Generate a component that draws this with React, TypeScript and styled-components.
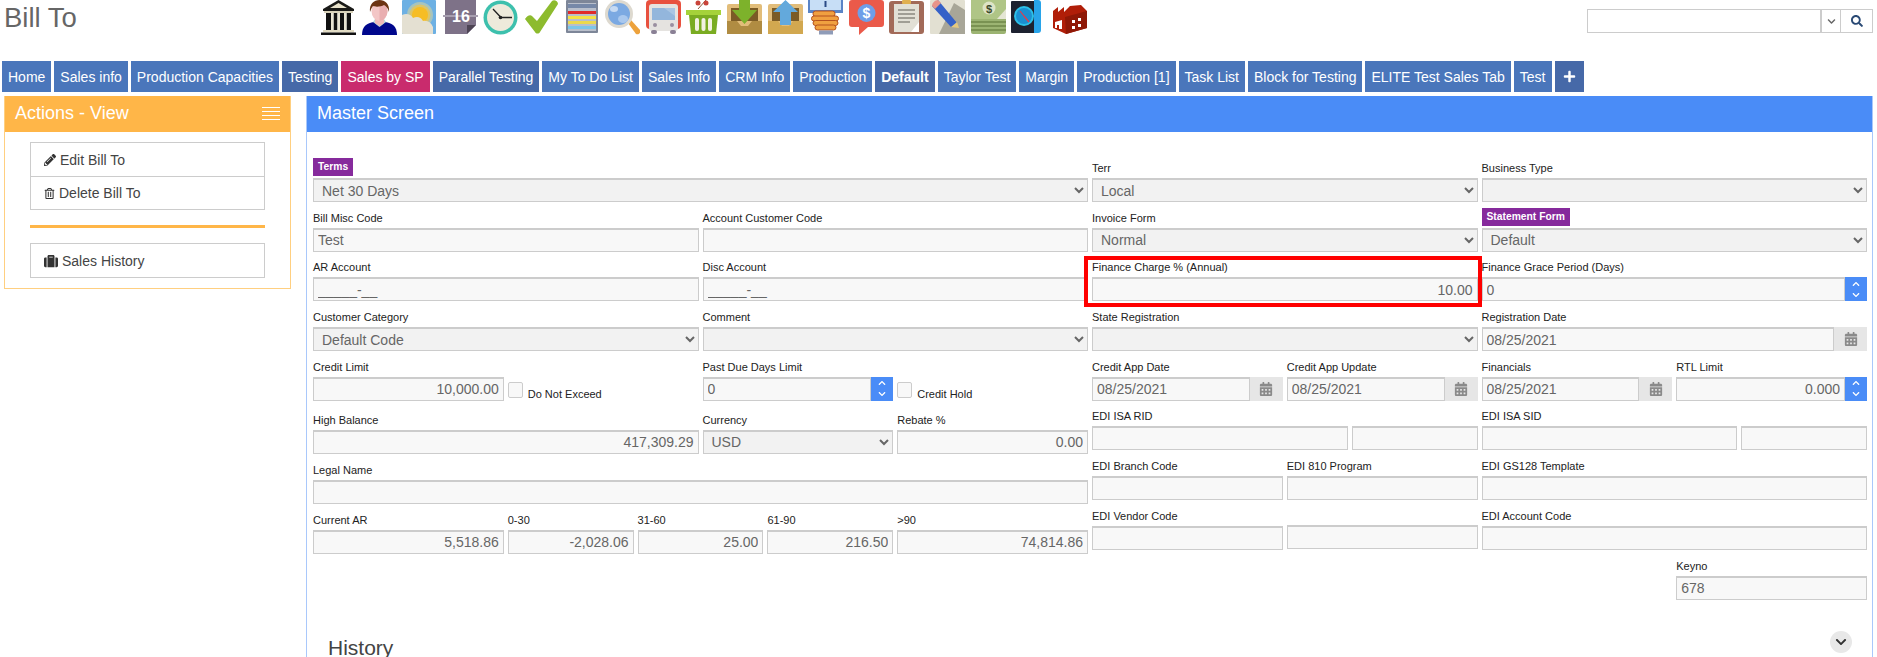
import React from 'react';
import styled, { createGlobalStyle } from 'styled-components';
import {
  FaCalendarAlt,
  FaChevronDown,
  FaChevronUp,
  FaPencilAlt,
  FaPlus,
  FaRegTrashAlt,
  FaSearch,
  FaSuitcase,
} from 'react-icons/fa';

const GlobalStyle = createGlobalStyle`
  html, body {
    margin: 0;
    height: 657px;
    overflow: hidden;
    background: #fff;
  }
  body {
    font-family: "Liberation Sans", Arial, sans-serif;
    color: #333;
  }
  * { box-sizing: border-box; }
`;

const Page = styled.div`
  width: 1877px;
  height: 657px;
  overflow: hidden;
  display: flex;
  flex-direction: column;
`;

const Header = styled.header`
  display: flex;
  align-items: flex-start;
  height: 61px;
  flex: none;
  padding: 0 4px;
`;

const Title = styled.h1`
  width: 317px;
  margin: 0;
  font-size: 27.5px;
  font-weight: 400;
  line-height: 35px;
  color: #666;
`;

const IconBar = styled.div`
  display: flex;
  gap: 5.6px;
`;

const SearchBox = styled.div`
  display: flex;
  margin: 9px 0 0 auto;
  height: 24px;
  width: 286px;
  border: 1px solid #ccc;
`;

const SearchInput = styled.input`
  flex: 1;
  min-width: 0;
  border: 0;
  border-right: 2px solid #ccc;
  outline: 0;
  background: #fff;
`;

const SearchCell = styled.span<{ $width: number }>`
  display: flex;
  align-items: center;
  justify-content: center;
  width: ${p => p.$width}px;
  color: ${p => (p.$width < 20 ? '#666' : '#2a4a75')};
  & + & { border-left: 1px solid #ccc; }
`;

const TabBar = styled.nav`
  display: flex;
  flex: none;
  gap: 3px;
  height: 31px;
  padding-left: 2px;
`;

const Tab = styled.a<{ $tone?: 'dark' | 'pink'; $bold?: boolean; $wide?: boolean }>`
  display: flex;
  align-items: center;
  padding: 0 ${p => (p.$wide ? 8 : 6)}px;
  font-size: 14px;
  font-weight: ${p => (p.$bold ? 700 : 400)};
  color: #fff;
  white-space: nowrap;
  background: ${p => (p.$tone === 'dark' ? '#4669a8' : p.$tone === 'pink' ? '#c92b6d' : '#4a76bb')};
`;

const Content = styled.div`
  display: flex;
  flex: 1;
  min-height: 0;
  gap: 15px;
  padding: 4px 4px 0;
`;

const Sidebar = styled.aside`
  flex: none;
  align-self: flex-start;
  width: 287px;
  border: 1px solid #ffcf80;
  border-top: 0;
`;

const PanelHeader = styled.div<{ $color: string }>`
  display: flex;
  align-items: center;
  justify-content: space-between;
  height: 36px;
  padding: 0 10px 2px;
  font-size: 18px;
  color: #fff;
  background: ${p => p.$color};
`;

const SidebarBody = styled.div`
  padding: 10px 25px 10px 25px;
`;

const MenuList = styled.div`
  display: flex;
  flex-direction: column;
  border: 1px solid #ccc;
`;

const MenuItem = styled.a`
  display: flex;
  align-items: center;
  gap: 4px;
  height: 33px;
  padding-left: 13px;
  font-size: 14px;
  color: #444;
  & + & { border-top: 1px solid #ccc; }
  svg { color: #333; }
`;

const MenuDivider = styled.hr`
  height: 3px;
  margin: 15px 0;
  border: 0;
  background: #ffb648;
`;

const MainPanel = styled.main`
  flex: 1;
  min-width: 0;
  border-left: 1px solid #a9c8fb;
  border-right: 1px solid #a9c8fb;
`;

const PanelBody = styled.div`
  padding: 26px 5px 0 6px;
`;

const FormColumns = styled.div`
  display: grid;
  grid-template-columns: 1fr 1fr;
  column-gap: 4px;
`;

const Row = styled.div<{ $after?: number }>`
  display: grid;
  grid-template-columns: repeat(12, minmax(0, 1fr));
  column-gap: 4px;
  margin-bottom: ${p => p.$after ?? 5.7}px;
`;

const Field = styled.div<{ $span: number; $start?: number; $marked?: boolean }>`
  position: relative;
  min-width: 0;
  grid-column: ${p => (p.$start ? `${p.$start} / span ${p.$span}` : `span ${p.$span}`)};
  ${p =>
    p.$marked &&
    `&::after {
      content: '';
      position: absolute;
      inset: -1px -4px -6px -8px;
      border: 4px solid #f00;
      pointer-events: none;
    }`}
`;

const FieldLabel = styled.div`
  height: 20px;
  font-size: 11px;
  line-height: 20px;
  color: #222;
  white-space: nowrap;
`;

const Badge = styled.span`
  display: inline-block;
  height: 18px;
  padding: 0 5px;
  font-size: 10.3px;
  font-weight: 700;
  line-height: 18px;
  color: #fff;
  vertical-align: top;
  background: #862a9c;
`;

const TextInput = styled.input<{ $right?: boolean; $lifted?: boolean }>`
  display: block;
  flex: 1;
  width: 100%;
  min-width: 0;
  height: 24px;
  margin-top: ${p => (p.$lifted ? '-1px' : 0)};
  padding: 0 4px;
  font: 14px "Liberation Sans", Arial, sans-serif;
  text-align: ${p => (p.$right ? 'right' : 'left')};
  color: #666;
  background: #f8f8f8;
  border: 1px solid #ccc;
  border-top-width: 2px;
  border-radius: 0;
  outline: 0;
`;

const SelectInput = styled.select`
  display: block;
  width: 100%;
  height: 24px;
  padding: 0 4px;
  font: 14px "Liberation Sans", Arial, sans-serif;
  color: #666;
  background-color: #f2f2f2;
  border: 1px solid #ccc;
  border-top-width: 2px;
  border-radius: 0;
  outline: 0;
`;

const InputGroup = styled.div`
  display: flex;
`;

const CalendarAddon = styled.span`
  display: flex;
  flex: none;
  align-items: center;
  justify-content: center;
  width: 33px;
  height: 24px;
  font-size: 14px;
  color: #8a8a8a;
  background: #e6e6e6;
`;

const Spinner = styled.span`
  display: flex;
  flex: none;
  flex-direction: column;
  align-items: center;
  justify-content: center;
  gap: 3px;
  width: 22px;
  height: 24px;
  font-size: 8px;
  color: #fff;
  background: #4a8cf7;
`;

const CheckLine = styled.label`
  display: flex;
  align-items: flex-end;
  gap: 5px;
  margin-top: 25px;
  font-size: 11px;
  line-height: 12px;
  color: #222;
`;

const CheckText = styled.span`
  margin-bottom: -2px;
`;

const CheckBox = styled.input`
  appearance: none;
  flex: none;
  width: 15px;
  height: 16px;
  margin: 0;
  background: #f8f8f8;
  border: 1px solid #ccc;
  border-radius: 2px;
`;

const SectionRow = styled.div`
  display: flex;
  align-items: flex-start;
  justify-content: space-between;
  margin-top: 35px;
  padding: 0 15px 0 15px;
`;

const SectionTitle = styled.h2`
  margin: 0;
  font-size: 21px;
  font-weight: 400;
  line-height: 16px;
  color: #444;
`;

const CollapseButton = styled.span`
  display: flex;
  align-items: center;
  justify-content: center;
  width: 22px;
  height: 22px;
  margin-top: -9px;
  font-size: 12px;
  color: #333;
  background: #e8e8e8;
  border-radius: 50%;
`;

const Ico: React.FC<{ children: React.ReactNode }> = ({ children }) => (
  <svg width="35" height="35" viewBox="0 0 35 35" style={{ flex: 'none', display: 'block' }}>
    {children}
  </svg>
);

const toolbarIcons: React.ReactNode[] = [
  // bank
  <Ico key="bank">
    <path d="M17.5 0 2 9v2h31V9z" fill="#1a1a18" />
    <path d="M17.5 3 9 8h17z" fill="#e9e3cc" />
    <rect x="3" y="11" width="29" height="2" fill="#d8d2ba" />
    <path d="M5 13h5v17H5zM12.5 13h4v17h-4zM19 13h4v17h-4zM25.5 13H30v17h-4.500z" fill="#111" />
    <path d="M10 13h2.500v17H10zM16.500 13H19v17h-2.500zM23 13h2.500v17H23z" fill="#e8e4d2" />
    <rect x="2" y="30" width="31" height="2.500" fill="#e2dcc4" />
    <rect x="0" y="32.500" width="35" height="2.500" fill="#111" />
  </Ico>,
  // person
  <Ico key="person">
    <path d="M0 35c0-9 5-12 12-13h11c7 1 12 4 12 13z" fill="#00078c" />
    <path d="M11 22l6.500 5 6.500-5-2-3H13z" fill="#bcdcd8" />
    <path d="M13 18h9v5l-4.500 3-4.500-3z" fill="#eeb9b9" />
    <ellipse cx="17.500" cy="11" rx="8" ry="10" fill="#f3c6c6" />
    <path d="M17.500 3v18c4 0 8-5 8-10s-4-8-8-8z" fill="#e9aeb0" />
    <path d="M8 12C7 4 12 0 17.500 0S28 4 27 12c-1-4-3-6-5-7-3 2-9 2-11 1-1 1-2 3-3 6z" fill="#6b3312" />
  </Ico>,
  // weather
  <Ico key="weather">
    <rect width="34" height="34" rx="1" fill="#6db0e3" />
    <circle cx="18" cy="15" r="13" fill="#a8c4bd" />
    <circle cx="18" cy="15" r="10.500" fill="#dcc56a" />
    <circle cx="18" cy="15" r="8" fill="#f6bd24" />
    <path d="M0 15c4-2 9-1 11 3 4-2 8-1 10 3 4-1 8 1 10 6v7H1a1 1 0 0 1-1-1z" fill="#e4e0d2" />
  </Ico>,
  // calendar
  <Ico key="calendar">
    <path d="M2 0h31v25l-9 9H2z" fill="#7e7288" />
    <path d="M33 25h-9v9z" fill="#cfc6e0" />
    <path d="M24 25h9l-9 9z" fill="#4d4454" />
    <rect x="0" y="15" width="35" height="2" fill="#a79fb0" />
    <text x="18" y="22" textAnchor="middle" fontFamily="Liberation Sans" fontWeight="700" fontSize="16" fill="#fff">16</text>
  </Ico>,
  // clock
  <Ico key="clock">
    <circle cx="17.500" cy="17.500" r="17" fill="#3dc0ad" />
    <circle cx="17.500" cy="17.500" r="13.500" fill="#eeeadb" />
    <path d="M10 9l7.500 8M17.500 17.500H29" stroke="#222" strokeWidth="1.300" fill="none" />
    <circle cx="17.500" cy="17.500" r="1.800" fill="#222" />
  </Ico>,
  // check
  <Ico key="check">
    <path d="M1 19c2-3 5-5 7-3l5 5L28 1c2-2 6 0 6 3L16 32c-1 2-4 2-5 0z" fill="#8dbb2e" />
  </Ico>,
  // report
  <Ico key="report">
    <rect x="1" y="0" width="32" height="33" rx="1" fill="#7d8698" />
    <rect x="3" y="3" width="28" height="28" fill="#b9bfcb" />
    <rect x="3" y="4" width="28" height="4" fill="#7688a8" />
    <rect x="3" y="11" width="28" height="3" fill="#e02a2a" />
    <rect x="3" y="16" width="28" height="3" fill="#f4e246" />
    <rect x="3" y="21" width="28" height="3" fill="#ecd94e" />
    <rect x="3" y="26" width="28" height="3" fill="#7cc6ea" />
  </Ico>,
  // magnifier
  <Ico key="magnifier">
    <path d="M23 23l3-3 9 10c1 3-1 5-4 4z" fill="#eda23c" />
    <circle cx="14" cy="14" r="14" fill="#ddd9cf" />
    <circle cx="14" cy="14" r="11" fill="#7ba9e2" />
    <ellipse cx="18" cy="19" rx="5" ry="4" fill="#a9c8ee" />
    <ellipse cx="9" cy="9" rx="4" ry="3" fill="#c6daf3" />
  </Ico>,
  // bus
  <Ico key="bus">
    <rect width="35" height="29" rx="4" fill="#e8513f" />
    <rect x="3" y="4" width="29" height="27" rx="3" fill="#e5e3e0" />
    <rect x="6" y="8" width="23" height="12" fill="#93b6dc" />
    <path d="M18 8h11v8z" fill="#a9c5e3" />
    <circle cx="9" cy="25" r="2" fill="#9a8fa0" />
    <circle cx="26" cy="25" r="2" fill="#9a8fa0" />
    <rect x="5" y="30" width="6" height="4" rx="2" fill="#8a8095" />
    <rect x="24" y="30" width="6" height="4" rx="2" fill="#8a8095" />
  </Ico>,
  // basket
  <Ico key="basket">
    <path d="M12 9l8-9" stroke="#8a5a3a" strokeWidth="1" fill="none" />
    <circle cx="12" cy="3" r="2.500" fill="#c9443a" />
    <circle cx="20" cy="3" r="2.500" fill="#c9443a" />
    <rect x="0" y="10" width="35" height="5" fill="#a5d23a" />
    <path d="M3 15h29l-2 19H5z" fill="#7aac22" />
    <rect x="9" y="18" width="4" height="13" rx="2" fill="#f2f2e2" />
    <rect x="15.500" y="18" width="4" height="13" rx="2" fill="#f2f2e2" />
    <rect x="22" y="18" width="4" height="13" rx="2" fill="#f2f2e2" />
  </Ico>,
  // download
  <Ico key="download">
    <rect y="4" width="35" height="30" rx="2" fill="#e2bd7a" />
    <rect x="4" y="8" width="27" height="13" fill="#7b5b26" />
    <path d="M0 21h10l4 5h7l4-5h10v13H0z" fill="#b08c42" />
    <path d="M12 0h11v10h7L17.500 24 5 10h7z" fill="#7db22b" />
  </Ico>,
  // upload
  <Ico key="upload">
    <rect y="4" width="35" height="30" rx="2" fill="#e2bd7a" />
    <rect x="4" y="8" width="27" height="13" fill="#7b5b26" />
    <path d="M0 21h10l4 5h7l4-5h10v13H0z" fill="#d2a850" />
    <path d="M17.500 0 30 12h-7v13H12V12H5z" fill="#63a9dc" />
  </Ico>,
  // hand holding a sign
  <Ico key="hand">
    <rect x="0" y="0" width="35" height="13" fill="#5a84c6" />
    <rect x="2" y="0" width="31" height="10" fill="#c7def6" />
    <rect x="16.500" y="1" width="2" height="6" fill="#2a4a86" />
    <g fill="#f0a040" stroke="#b4501e" strokeWidth="1">
      <rect x="5" y="11" width="22" height="5.500" rx="2.500" />
      <rect x="3.500" y="16" width="27" height="5" rx="2.500" />
      <rect x="5" y="20.500" width="25" height="5" rx="2.500" />
      <rect x="7" y="25" width="21" height="5" rx="2.500" />
    </g>
    <rect x="11" y="30.500" width="14" height="4" fill="#8f9cb8" />
  </Ico>,
  // speech bubble
  <Ico key="speech">
    <path d="M3 0h29a3 3 0 0 1 3 3v21a3 3 0 0 1-3 3H19l-9 8v-8H3a3 3 0 0 1-3-3V3a3 3 0 0 1 3-3z" fill="#ea5a4a" />
    <circle cx="17.500" cy="13" r="9" fill="#6e9ee8" />
    <text x="17.500" y="18" textAnchor="middle" fontFamily="Liberation Sans" fontWeight="700" fontSize="14" fill="#fff">$</text>
  </Ico>,
  // clipboard
  <Ico key="clipboard">
    <rect y="1" width="35" height="33" rx="3" fill="#a26a58" />
    <rect x="5" y="4" width="25" height="28" fill="#e2e0d6" />
    <rect x="13" y="0" width="9" height="4" rx="1" fill="#e0b050" />
    <path d="M9 10h17M9 14h17M9 18h17M9 22h12" stroke="#8b8880" strokeWidth="1.400" />
    <path d="M30 22v10H22z" fill="#fff" />
  </Ico>,
  // pencil
  <Ico key="pencil">
    <rect width="35" height="34" rx="1" fill="#e2e0d2" />
    <path d="M24 3l11 7v24H9z" fill="#a8a698" />
    <path d="M8 0 27 23l-2 3-4 1L2 6z" fill="#3561c8" />
    <path d="M2 6c0-3 3-6 6-6l3 3-6 6z" fill="#e6948a" />
    <path d="M21 27l6-5 2 6z" fill="#e5c87e" />
  </Ico>,
  // money
  <Ico key="money">
    <rect y="0" width="35" height="34" rx="2" fill="#9cb472" />
    <rect y="0" width="35" height="19" fill="#afc586" />
    <path d="M0 22h35M0 26h35M0 30h35" stroke="#6f8748" strokeWidth="1.400" />
    <circle cx="18" cy="8" r="6.500" fill="#dde4c6" />
    <text x="18" y="12.500" textAnchor="middle" fontFamily="Liberation Sans" fontWeight="700" fontSize="11" fill="#3c4a2a">$</text>
    <path d="M35 9v10h-9z" fill="#e4e6d4" />
  </Ico>,
  // clock book
  <Ico key="clockbook">
    <rect x="0" y="1" width="24" height="32" rx="1" fill="#1d2230" />
    <path d="M23 0h4c2 0 3 1 3 3v27c0 2-1 3-3 3h-4z" fill="#28a4ea" />
    <circle cx="13" cy="16" r="10" fill="#2cc0e8" />
    <circle cx="13" cy="16" r="8" fill="#1b8fd0" />
    <path d="M13 16l-4-5M13 16l5 6" stroke="#e83a4a" strokeWidth="1.200" />
  </Ico>,
  // factory
  <Ico key="factory">
    <path d="M1 11l5-4v5l6-5v5l6-6 11-1 6 6v17L14 34 1 28z" fill="#b01e08" />
    <path d="M13 17l22-6v17L14 34z" fill="#8f1806" />
    <path d="M3 22l7-2v9H7v-4H5v3H3z" fill="#fff" />
    <path d="M20 20h3v3h-3zM26 18h3v3h-3zM20 26h3v3h-3zM26 24h3v3h-3z" fill="#fff" />
  </Ico>,
];

type TabDef = { label: React.ReactNode; tone?: 'dark' | 'pink'; bold?: boolean; wide?: boolean };

const tabs: TabDef[] = [
  { label: 'Home' },
  { label: 'Sales info' },
  { label: 'Production Capacities' },
  { label: 'Testing', tone: 'dark' },
  { label: 'Sales by SP', tone: 'pink' },
  { label: 'Parallel Testing', tone: 'dark' },
  { label: 'My To Do List' },
  { label: 'Sales Info' },
  { label: 'CRM Info' },
  { label: 'Production' },
  { label: 'Default', tone: 'dark', bold: true },
  { label: 'Taylor Test' },
  { label: 'Margin' },
  { label: 'Production [1]' },
  { label: 'Task List' },
  { label: 'Block for Testing' },
  { label: 'ELITE Test Sales Tab' },
  { label: 'Test' },
  { label: <FaPlus size={13} />, tone: 'dark', wide: true },
];

const Select: React.FC<{ value?: string }> = ({ value = '' }) => (
  <SelectInput defaultValue={value}>
    <option value={value}>{value}</option>
  </SelectInput>
);

const DateInput: React.FC = () => (
  <InputGroup>
    <TextInput readOnly defaultValue="08/25/2021" />
    <CalendarAddon>
      <FaCalendarAlt />
    </CalendarAddon>
  </InputGroup>
);

const SpinInput: React.FC<{ value: string; right?: boolean }> = ({ value, right }) => (
  <InputGroup>
    <TextInput readOnly defaultValue={value} $right={right} />
    <Spinner>
      <FaChevronUp />
      <FaChevronDown />
    </Spinner>
  </InputGroup>
);

const Text: React.FC<{ value?: string; right?: boolean; lifted?: boolean }> = ({ value = '', right, lifted }) => (
  <TextInput readOnly defaultValue={value} $right={right} $lifted={lifted} />
);

export default function App() {
  return (
    <Page>
      <GlobalStyle />
      <Header>
        <Title>Bill To</Title>
        <IconBar>{toolbarIcons}</IconBar>
        <SearchBox>
          <SearchInput />
          <SearchCell $width={18}>
            <FaChevronDown size={9} />
          </SearchCell>
          <SearchCell $width={32}>
            <FaSearch size={12} />
          </SearchCell>
        </SearchBox>
      </Header>

      <TabBar>
        {tabs.map((tab, i) => (
          <Tab key={i} $tone={tab.tone} $bold={tab.bold} $wide={tab.wide}>
            {tab.label}
          </Tab>
        ))}
      </TabBar>

      <Content>
        <Sidebar>
          <PanelHeader $color="#ffb648">
            Actions - View
            <svg width="18" height="13" viewBox="0 0 18 13">
              <path d="M0 .5h18M0 4.500h18M0 8.500h18M0 12.500h18" stroke="#fff" strokeWidth="1" />
            </svg>
          </PanelHeader>
          <SidebarBody>
            <MenuList>
              <MenuItem>
                <FaPencilAlt size={12} /> Edit Bill To
              </MenuItem>
              <MenuItem>
                <FaRegTrashAlt size={11} /> Delete Bill To
              </MenuItem>
            </MenuList>
            <MenuDivider />
            <MenuList>
              <MenuItem>
                <FaSuitcase size={14} /> Sales History
              </MenuItem>
            </MenuList>
          </SidebarBody>
        </Sidebar>

        <MainPanel>
          <PanelHeader $color="#4a8cf7">Master Screen</PanelHeader>
          <PanelBody>
            <FormColumns>
              <div>
                <Row>
                  <Field $span={12}>
                    <FieldLabel>
                      <Badge>Terms</Badge>
                    </FieldLabel>
                    <Select value="Net 30 Days" />
                  </Field>
                </Row>
                <Row>
                  <Field $span={6}>
                    <FieldLabel>Bill Misc Code</FieldLabel>
                    <Text value="Test" />
                  </Field>
                  <Field $span={6}>
                    <FieldLabel>Account Customer Code</FieldLabel>
                    <Text />
                  </Field>
                </Row>
                <Row>
                  <Field $span={6}>
                    <FieldLabel>AR Account</FieldLabel>
                    <Text value="_____-__" />
                  </Field>
                  <Field $span={6}>
                    <FieldLabel>Disc Account</FieldLabel>
                    <Text value="_____-__" />
                  </Field>
                </Row>
                <Row>
                  <Field $span={6}>
                    <FieldLabel>Customer Category</FieldLabel>
                    <Select value="Default Code" />
                  </Field>
                  <Field $span={6}>
                    <FieldLabel>Comment</FieldLabel>
                    <Select />
                  </Field>
                </Row>
                <Row $after={9.2}>
                  <Field $span={3}>
                    <FieldLabel>Credit Limit</FieldLabel>
                    <Text value="10,000.00" right />
                  </Field>
                  <Field $span={3}>
                    <CheckLine>
                      <CheckBox type="checkbox" />
                      <CheckText>Do Not Exceed</CheckText>
                    </CheckLine>
                  </Field>
                  <Field $span={3}>
                    <FieldLabel>Past Due Days Limit</FieldLabel>
                    <SpinInput value="0" />
                  </Field>
                  <Field $span={3}>
                    <CheckLine>
                      <CheckBox type="checkbox" />
                      <CheckText>Credit Hold</CheckText>
                    </CheckLine>
                  </Field>
                </Row>
                <Row $after={6}>
                  <Field $span={6}>
                    <FieldLabel>High Balance</FieldLabel>
                    <Text value="417,309.29" right />
                  </Field>
                  <Field $span={3}>
                    <FieldLabel>Currency</FieldLabel>
                    <Select value="USD" />
                  </Field>
                  <Field $span={3}>
                    <FieldLabel>Rebate %</FieldLabel>
                    <Text value="0.00" right />
                  </Field>
                </Row>
                <Row $after={6}>
                  <Field $span={12}>
                    <FieldLabel>Legal Name</FieldLabel>
                    <Text />
                  </Field>
                </Row>
                <Row>
                  <Field $span={3}>
                    <FieldLabel>Current AR</FieldLabel>
                    <Text value="5,518.86" right />
                  </Field>
                  <Field $span={2}>
                    <FieldLabel>0-30</FieldLabel>
                    <Text value="-2,028.06" right />
                  </Field>
                  <Field $span={2}>
                    <FieldLabel>31-60</FieldLabel>
                    <Text value="25.00" right />
                  </Field>
                  <Field $span={2}>
                    <FieldLabel>61-90</FieldLabel>
                    <Text value="216.50" right />
                  </Field>
                  <Field $span={3}>
                    <FieldLabel>&gt;90</FieldLabel>
                    <Text value="74,814.86" right />
                  </Field>
                </Row>
              </div>

              <div>
                <Row>
                  <Field $span={6}>
                    <FieldLabel>Terr</FieldLabel>
                    <Select value="Local" />
                  </Field>
                  <Field $span={6}>
                    <FieldLabel>Business Type</FieldLabel>
                    <Select />
                  </Field>
                </Row>
                <Row>
                  <Field $span={6}>
                    <FieldLabel>Invoice Form</FieldLabel>
                    <Select value="Normal" />
                  </Field>
                  <Field $span={6}>
                    <FieldLabel>
                      <Badge>Statement Form</Badge>
                    </FieldLabel>
                    <Select value="Default" />
                  </Field>
                </Row>
                <Row>
                  <Field $span={6} $marked>
                    <FieldLabel>Finance Charge % (Annual)</FieldLabel>
                    <Text value="10.00" right />
                  </Field>
                  <Field $span={6}>
                    <FieldLabel>Finance Grace Period (Days)</FieldLabel>
                    <SpinInput value="0" />
                  </Field>
                </Row>
                <Row>
                  <Field $span={6}>
                    <FieldLabel>State Registration</FieldLabel>
                    <Select />
                  </Field>
                  <Field $span={6}>
                    <FieldLabel>Registration Date</FieldLabel>
                    <DateInput />
                  </Field>
                </Row>
                <Row $after={5.5}>
                  <Field $span={3}>
                    <FieldLabel>Credit App Date</FieldLabel>
                    <DateInput />
                  </Field>
                  <Field $span={3}>
                    <FieldLabel>Credit App Update</FieldLabel>
                    <DateInput />
                  </Field>
                  <Field $span={3}>
                    <FieldLabel>Financials</FieldLabel>
                    <DateInput />
                  </Field>
                  <Field $span={3}>
                    <FieldLabel>RTL Limit</FieldLabel>
                    <SpinInput value="0.000" right />
                  </Field>
                </Row>
                <Row>
                  <Field $span={4}>
                    <FieldLabel>EDI ISA RID</FieldLabel>
                    <Text />
                  </Field>
                  <Field $span={2}>
                    <FieldLabel />
                    <Text />
                  </Field>
                  <Field $span={4}>
                    <FieldLabel>EDI ISA SID</FieldLabel>
                    <Text />
                  </Field>
                  <Field $span={2}>
                    <FieldLabel />
                    <Text />
                  </Field>
                </Row>
                <Row>
                  <Field $span={3}>
                    <FieldLabel>EDI Branch Code</FieldLabel>
                    <Text />
                  </Field>
                  <Field $span={3}>
                    <FieldLabel>EDI 810 Program</FieldLabel>
                    <Text />
                  </Field>
                  <Field $span={6}>
                    <FieldLabel>EDI GS128 Template</FieldLabel>
                    <Text />
                  </Field>
                </Row>
                <Row $after={6}>
                  <Field $span={3}>
                    <FieldLabel>EDI Vendor Code</FieldLabel>
                    <Text />
                  </Field>
                  <Field $span={3}>
                    <FieldLabel />
                    <Text lifted />
                  </Field>
                  <Field $span={6}>
                    <FieldLabel>EDI Account Code</FieldLabel>
                    <Text />
                  </Field>
                </Row>
                <Row>
                  <Field $span={3} $start={10}>
                    <FieldLabel>Keyno</FieldLabel>
                    <Text value="678" />
                  </Field>
                </Row>
              </div>
            </FormColumns>
            <SectionRow>
              <SectionTitle>History</SectionTitle>
              <CollapseButton>
                <FaChevronDown />
              </CollapseButton>
            </SectionRow>
          </PanelBody>
        </MainPanel>
      </Content>
    </Page>
  );
}
